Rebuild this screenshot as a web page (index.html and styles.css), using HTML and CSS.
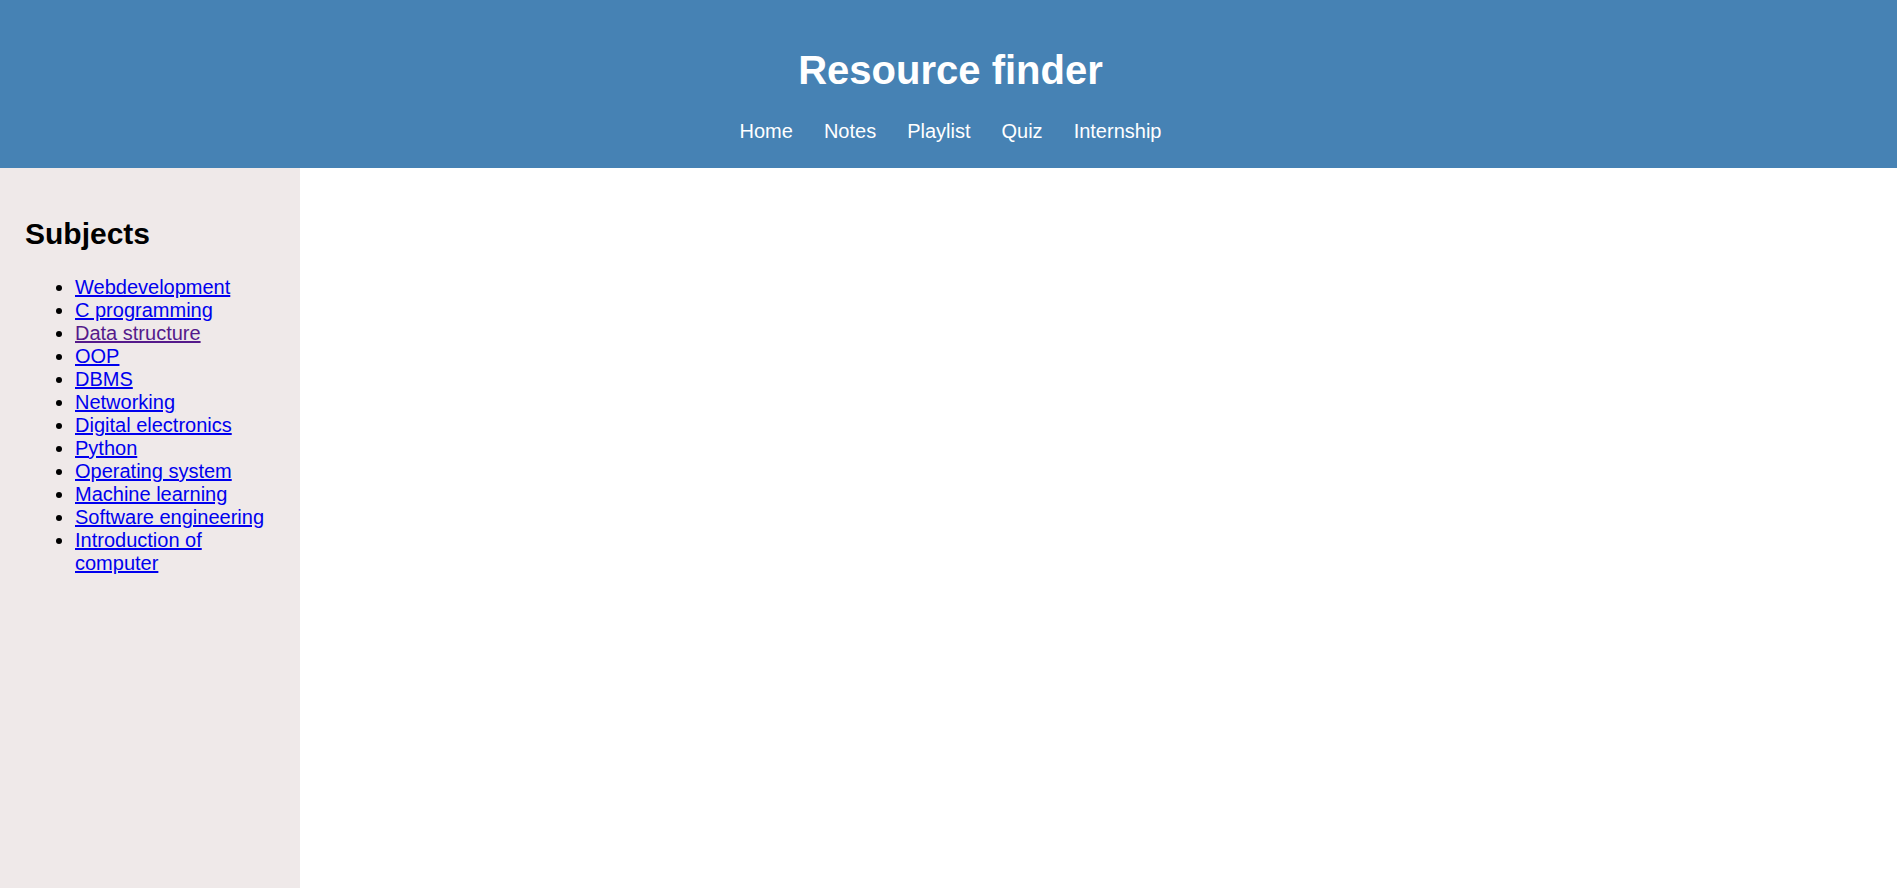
FILE: index.html
```html
<!DOCTYPE html>
<html lang="en">
<head>
<meta charset="utf-8">
<title>Resource finder</title>
<link rel="stylesheet" href="styles.css">
</head>
<body>
<div class="page">
  <header class="site-header">
    <h1 class="site-title">Resource finder</h1>
    <nav class="site-nav">
      <a href="#" class="nav-link">Home</a>
      <a href="#" class="nav-link">Notes</a>
      <a href="#" class="nav-link">Playlist</a>
      <a href="#" class="nav-link">Quiz</a>
      <a href="#" class="nav-link">Internship</a>
    </nav>
  </header>
  <div class="content">
    <aside class="sidebar">
      <h2 class="sidebar-title">Subjects</h2>
      <ul class="subject-list">
        <li><a href="#" class="subject-link">Webdevelopment</a></li>
        <li><a href="#" class="subject-link">C programming</a></li>
        <li><a href="#" class="subject-link visited">Data structure</a></li>
        <li><a href="#" class="subject-link">OOP</a></li>
        <li><a href="#" class="subject-link">DBMS</a></li>
        <li><a href="#" class="subject-link">Networking</a></li>
        <li><a href="#" class="subject-link">Digital electronics</a></li>
        <li><a href="#" class="subject-link">Python</a></li>
        <li><a href="#" class="subject-link">Operating system</a></li>
        <li><a href="#" class="subject-link">Machine learning</a></li>
        <li><a href="#" class="subject-link">Software engineering</a></li>
        <li><a href="#" class="subject-link">Introduction of computer</a></li>
      </ul>
    </aside>
    <main class="main"></main>
  </div>
</div>
</body>
</html>
```

FILE: styles.css
```css
html, body {
  margin: 0;
  padding: 0;
  height: 100%;
}

body {
  font-family: "Liberation Sans", Arial, sans-serif;
  font-size: 20px;
  color: #000;
  background: #fff;
}

.page {
  display: flex;
  flex-direction: column;
  min-height: 100vh;
}

.site-header {
  background: #4682b4;
  color: #fff;
  text-align: center;
  padding: 47px 0 25px 4px;
}

.site-title {
  margin: 0 0 27px;
  font-size: 40px;
  line-height: 46px;
  font-weight: bold;
}

.site-nav {
  display: flex;
  justify-content: center;
  gap: 31px;
  line-height: 23px;
}

.nav-link {
  color: #fff;
  text-decoration: none;
  font-size: 20px;
}

.content {
  flex: 1;
  display: flex;
}

.sidebar {
  width: 300px;
  box-sizing: border-box;
  background: #efe9e9;
  padding: 49px 25px 25px;
}

.sidebar-title {
  margin: 0 0 25px;
  font-size: 30px;
  line-height: 34px;
  font-weight: bold;
}

.subject-list {
  margin: 0;
  padding-left: 50px;
  line-height: 23px;
}

.subject-link {
  color: #0000ee;
  text-decoration: underline;
}

.subject-link.visited {
  color: #551a8b;
}

.main {
  flex: 1;
  background: #fff;
}
```
